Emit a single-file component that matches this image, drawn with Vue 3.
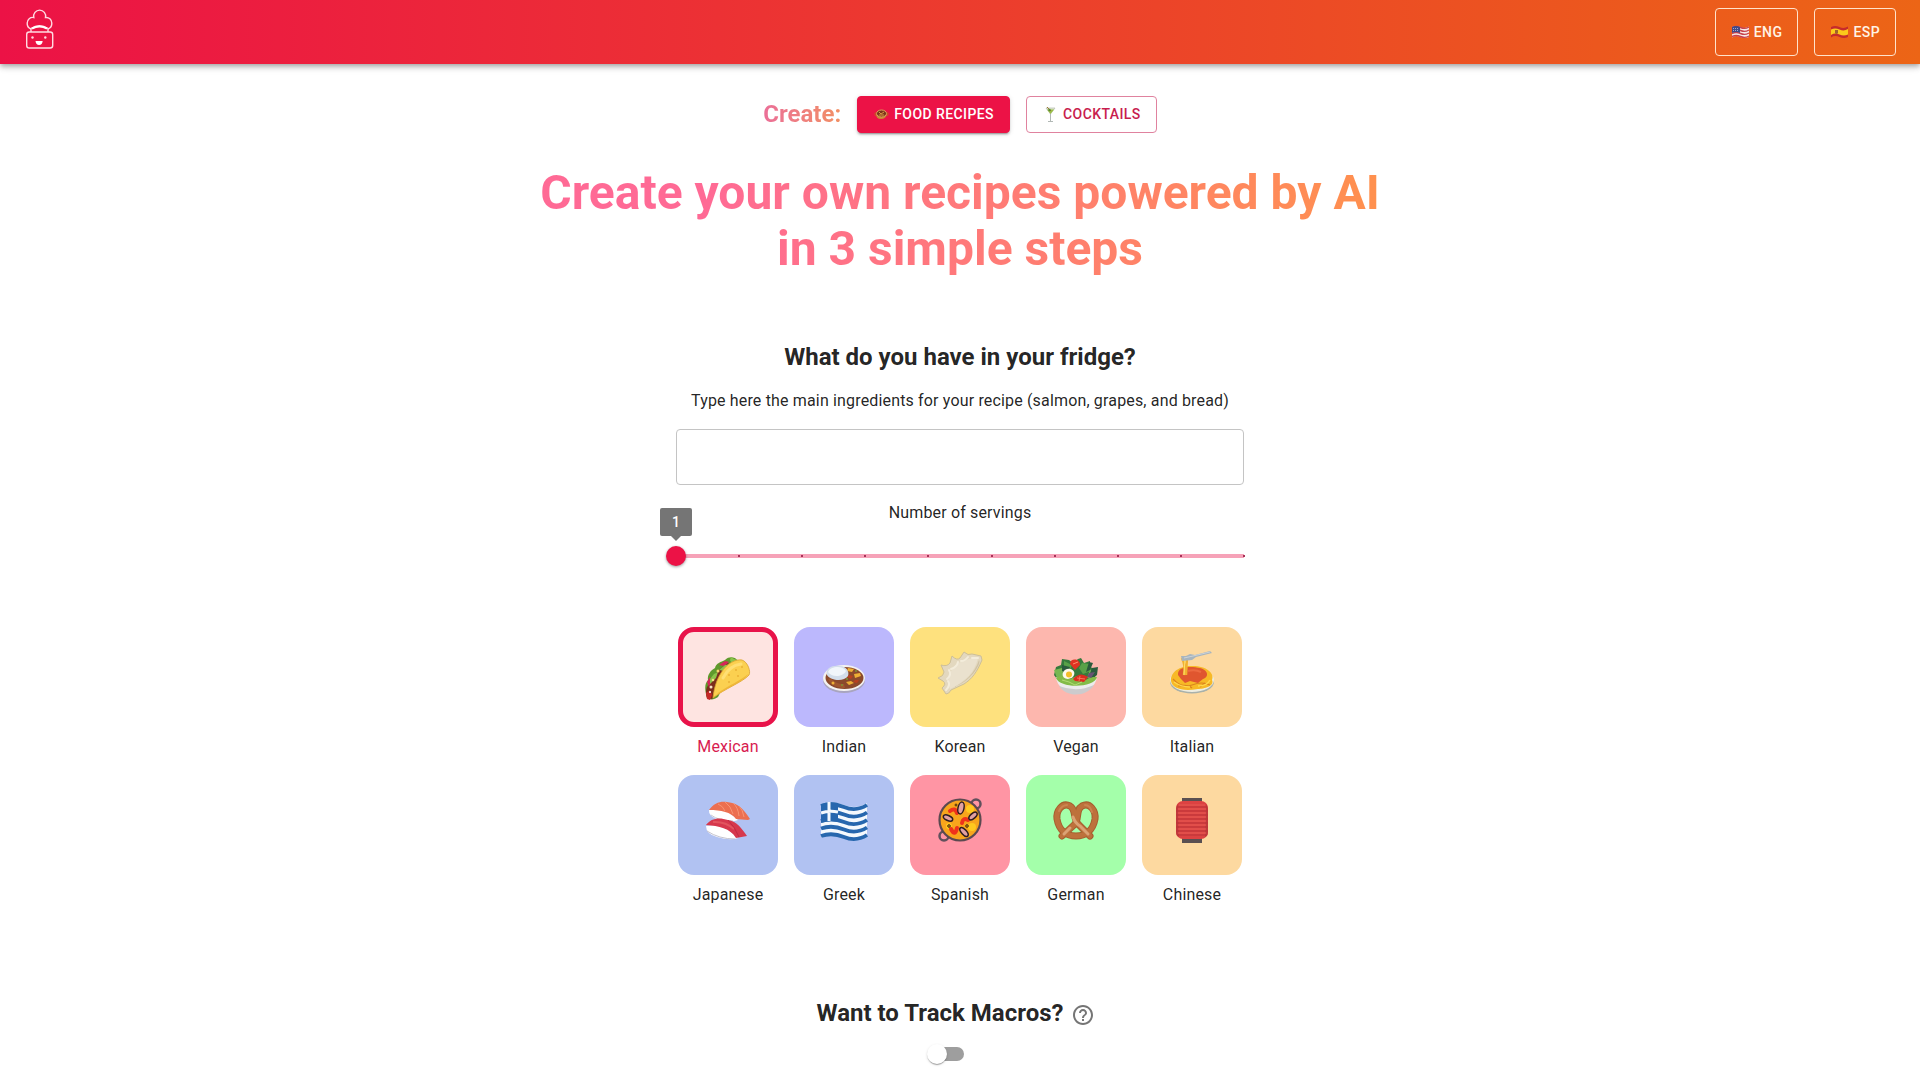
<script setup>
import { ref } from 'vue'

const mode = ref('food')
const ingredients = ref('')
const servings = ref(1)
const selected = ref('Mexican')
const trackMacros = ref(false)

const cuisines = [
  {
    name: 'Mexican',
    color: '#fee4e1',
    art: `
      <path d="M3 45C1 38 0 31 4 27C3 22 7 17 11 15C12 10 17 9 21 7C25 3 31 4 33 7L14 44C10 47 6 47 3 45Z" fill="#5f9a2c"/>
      <path d="M3 45C1 38 2 34 6 30L9 24L15 17L23 10L28 12L13 40L8 46Z" fill="#7b2d1c"/>
      <path d="M15 12l6-4 4 1-5 4zM3 29l3-5 2 3-3 7z" fill="#d7265a"/>
      <path d="M2 40l4-3 2 5-2 5-3-1z" fill="#c62828"/>
      <path d="M6 26l4-5 4-2-2 6-6 6zM15 17l6-5 6-1-7 7zM27 4l3 2 4 1-6 4-2-4z" fill="#8bc34a"/>
      <circle cx="7" cy="34" r="1.5" fill="#f6e3c4"/><circle cx="14" cy="18" r="1.5" fill="#f6d76c"/><circle cx="6" cy="39" r="1" fill="#fff"/><circle cx="9" cy="27" r="1.3" fill="#f5df83"/>
      <path d="M9 45C10 36 12 28 17 20C23 10 32 6 38 7C44 9 47 19 45 22C39 29 20 36 9 45Z" fill="#fbd050" stroke="#d9a22f" stroke-width=".8"/>
      <path d="M14 40C23 33 38 27 44 21C40 29 21 35 11 44Z" fill="#efb638"/>
      <path d="M19 25c4-8 10-13 18-14" stroke="#ffdf74" stroke-width="3" fill="none" stroke-linecap="round"/>
      <g fill="#dc9b22"><circle cx="25" cy="22" r=".8"/><circle cx="32" cy="17" r=".8"/><circle cx="38" cy="14" r=".8"/><circle cx="25" cy="29" r=".8"/><circle cx="34" cy="23" r=".8"/></g>`
  },
  {
    name: 'Indian',
    color: '#bcb8fd',
    art: `
      <ellipse cx="24" cy="32" rx="21" ry="13" fill="#a9a5bf"/>
      <ellipse cx="24" cy="30" rx="21" ry="13" fill="#f4f2f1"/>
      <ellipse cx="24.500" cy="30" rx="19" ry="11" fill="#8b492c"/>
      <path d="M8 31c3 7 11 9 17 9l-1-4c-6 0-10-2-13-6z" fill="#a0572f"/>
      <g fill="#edae35"><path d="M28 20l6 1-2 3-5-1zM34 26l6-1 1 3-6 2zM26 34l5-1 3 2-5 2z"/><circle cx="13" cy="35" r="1.500"/></g>
      <g fill="#b8401f"><path d="M29 27l4 1-2 3-4-2zM35 32l4 0-2 3-4-1z"/></g>
      <g fill="#7d9338"><circle cx="36" cy="23" r="1"/><circle cx="22" cy="37" r="1"/><circle cx="27" cy="31" r="1"/></g>
      <path d="M7 27C5 20 13 17 19 18C25 17 30 23 28 28C24 34 11 33 7 27Z" fill="#d3deeb"/>
      <path d="M8 24C10 18 23 17 26 23C23 29 12 30 8 24Z" fill="#f1f6fb"/>`
  },
  {
    name: 'Korean',
    color: '#fee17e',
    art: `
      <path d="M10 46L6 40Q11 36 7 33L2 30Q8 28 8 24L5 17Q11 19 14 15L16 8Q21 13 24 10L28 4Q32 8 36 6L45 8L46 12C41 24 36 31 28 36L15 42Q13 46 10 46Z" fill="#e3d8bf" stroke="#cdbf98" stroke-linejoin="round"/>
      <path d="M14 41Q9 30 17 20T42 10C39 23 31 33 14 41Z" fill="#eae1ce"/>
      <path d="M17 39C28 36 39 25 43 12C46 15 34 35 17 39Z" fill="#d0c2a3"/>
      <path d="M10 42q5-5 2-9m-1-2q5-4 2-9m2-1q6-2 7-7m3-1q4 0 7-4m4 1l6 0" stroke="#f3ecdb" stroke-width="2" fill="none" stroke-linecap="round"/>`
  },
  {
    name: 'Vegan',
    color: '#fdb7ae',
    art: `
      <path d="M2 27l2-8 5-2 1-6 7 1 4 3 5-4 3-1 3 5 6-2 0 6 5 2-1 6-4 6-30 2z" fill="#367a3c"/>
      <path d="M12 13l8 4-2 5-6-2zM30 15l7 1 2 7-8 3-4-6z" fill="#58a148"/>
      <path d="M2 22l8-2 2 9-6 4zM38 22l6 4-2 6-7-2z" fill="#78b752"/>
      <path d="M10 17l8 2-2 5-6-1zM37 14l4 1-3 7-4 2zM40 20l6-1-1 8-5 4-3-3z" fill="#2b5b3d"/>
      <path d="M37 25l6-1-4 6-4-1z" fill="#685274"/>
      <path d="M18 16c0-6 10-6 10 1l-5 5z" fill="#df3222"/><path d="M21 16l5-2" stroke="#ff8e6b"/>
      <path d="M4 29C6 50 42 50 45 29L36 34L12 34Z" fill="#ececec"/>
      <path d="M7 38C15 50 35 49 42 37Q25 45 7 38Z" fill="#cccbcd"/>
      <path d="M4 30l7-3 7 4 7-3 8 4 8-3 4 0c-2 11-37 12-41 1z" fill="#83bb48"/>
      <ellipse cx="16.500" cy="26" rx="6" ry="5" fill="#fff8eb" transform="rotate(-18 16 26)"/><circle cx="17" cy="26.500" r="3" fill="#f4bd28"/>
      <path d="M21 31q7-8 15-2l-4 5-9-1z" fill="#dc2c1e"/><path d="M25 30l8 1m-5-3l-1 5" stroke="#f5765a"/>
      <path d="M10 32l7 2 6 3 7-3" stroke="#b1db72" fill="none"/>`
  },
  {
    name: 'Italian',
    color: '#fdd9a0',
    art: `
      <ellipse cx="24" cy="34" rx="22" ry="11.500" fill="#a9b1aa"/>
      <ellipse cx="24" cy="32" rx="22" ry="12" fill="#eeede0"/>
      <path d="M3 33C2 23 14 17 25 18C38 18 47 25 44 32C47 38 36 41 30 41C14 44 4 40 3 33Z" fill="#f7b926"/>
      <path d="M5 31q9 10 19 6t18 0M10 38q10-2 14 2m8-1l5-4" stroke="#dc851e" stroke-width="1.200" fill="none"/>
      <path d="M6 34q7 5 16 5m8-1q9 0 12-6" stroke="#ffd84d" stroke-width="1.500" fill="none"/>
      <path d="M10 27C9 18 23 18 32 20C42 23 40 30 35 31L30 35L22 33L17 35L13 31Z" fill="#e0562f"/>
      <path d="M20 23q7-2 13 1" stroke="#ec6a40" stroke-width="2" fill="none"/>
      <path d="M14 10q4 8 2 17m3-18l-1 18" stroke="#f1b131" stroke-width="2.500" fill="none"/><path d="M17 10l-1 17" stroke="#ffe069"/>
      <path d="M13 8h5l4-2 5 1L42 3l2 2-16 4-4 3-10 1z" fill="#a9b5bd"/><path d="M16 10l9-2L42 4" stroke="#ccd3d8" fill="none"/>`
  },
  {
    name: 'Japanese',
    color: '#b1c2f2',
    art: `
      <path d="M5 14q-1 6 10 10 11 3 19 0L20 12z" fill="#fff"/><path d="M7 19q8 6 22 6" stroke="#c8cbd4" fill="none"/>
      <path d="M5 14C10 7 16 5 23 6C35 7 40 14 46 23L44 24L32 23C27 16 17 14 5 14Z" fill="#ec6f50"/>
      <path d="M14 8q5 2 7 7m0-9q6 4 8 12m0-11q5 4 6 13m0-10q4 4 5 11" stroke="#f79474" stroke-width="1" fill="none"/>
      <path d="M2 30q0 8 11 11 13 4 21 1L18 28z" fill="#fff"/><path d="M3 35q12 8 28 8" stroke="#c5c4cf" fill="none"/>
      <path d="M2 29C7 22 15 21 24 24C33 25 38 33 43 40L32 42C26 32 15 30 2 29Z" fill="#d6384d"/>
      <path d="M9 26q12-1 21 7" stroke="#e2545f" stroke-width="2" fill="none"/><path d="M24 24q7 7 11 17" stroke="#c02a43" fill="none"/>`
  },
  {
    name: 'Greek',
    color: '#b1c2f2',
    art: `
      <path d="M1 8Q12 4 24 9T47 7V40Q36 45 24 40T1 42Z" fill="#f5f9fd"/>
      <g fill="none" stroke="#2767ae" stroke-width="3.800"><path d="M1 10Q12 6 24 11T47 9M1 17.500Q12 13.500 24 18.500T47 16.500M1 25Q12 21 24 26T47 24M1 32.500Q12 28.500 24 33.500T47 31.500M1 40Q12 36 24 41T47 39"/></g>
      <path d="M1 8Q9 5 18 7V26Q9 24 1 27Z" fill="#2767ae"/><path d="M9 6v19M1 17q8-3 17-1" stroke="#f5f9fd" stroke-width="3" fill="none"/>`
  },
  {
    name: 'Spanish',
    color: '#ff95a4',
    art: `
      <g fill="none" stroke="#61505c" stroke-width="2.500"><circle cx="40" cy="8" r="4.500"/><circle cx="8" cy="40" r="4.500"/></g>
      <circle cx="24" cy="24" r="20.500" fill="#f8a51c" stroke="#5c4950" stroke-width="2.200"/>
      <g fill="#ffc91f"><circle cx="34" cy="13" r="4"/><circle cx="36" cy="31" r="4"/><circle cx="13" cy="30" r="3"/></g>
      <g fill="none" stroke="#ef321b" stroke-width="4" stroke-linecap="round"><path d="M14 15q5-4 7 2M15 33q4 8 6-1M26 27q1-6 6-3"/></g>
      <g fill="#e2a0a1" stroke="#2d1c22" stroke-width="1.500"><ellipse cx="25" cy="12" rx="3" ry="6" transform="rotate(12 25 12)"/><ellipse cx="12" cy="22" rx="2.500" ry="5" transform="rotate(-65 12 22)"/><ellipse cx="37" cy="20" rx="2.500" ry="5" transform="rotate(48 37 20)"/><ellipse cx="28" cy="36" rx="2.500" ry="5.500" transform="rotate(-42 28 36)"/></g>
      <g fill="#d28b11" stroke="#4a300f"><circle cx="13" cy="30" r="1.300"/><circle cx="31" cy="30" r="1.300"/><circle cx="20" cy="9" r="1"/></g>`
  },
  {
    name: 'German',
    color: '#a4ffaa',
    art: `
      <path d="M10 40L22 29C28 24 23 14 30 10C38 6 44 15 43 23C41 35 33 40 24 40C15 40 7 35 5 23C4 15 10 6 18 10C25 14 20 23 27 29L38 40" fill="none" stroke="#a65e2f" stroke-width="7" stroke-linecap="round" stroke-linejoin="round"/>
      <path d="M10 40L22 29C28 24 23 14 30 10C38 6 44 15 43 23C41 35 33 40 24 40C15 40 7 35 5 23C4 15 10 6 18 10C25 14 20 23 27 29L38 40" fill="none" stroke="#bd713c" stroke-width="5" stroke-linecap="round"/>
      <path d="M21 21q2 6 7 9l8 8M12 38l6-6" fill="none" stroke="#dba274" stroke-width="3" stroke-linecap="round"/>
      <path d="M7 15q3-6 8-6M33 9q5 0 7 7" fill="none" stroke="#cb8450" stroke-width="2" stroke-linecap="round"/>`
  },
  {
    name: 'Chinese',
    color: '#fdd9a0',
    art: `
      <path d="M14 2h20v5H14zM14 42h20v5H14z" fill="#5a5051"/>
      <rect x="8" y="5" width="32" height="38" rx="7" fill="#dc4242"/>
      <path d="M10 8q-2 2-2 5v23q0 4 3 5zM38 8q2 2 2 5v23q0 4-3 5z" fill="#c23a3d"/>
      <path d="M9 11h30M8 15h32M8 19h32M8 23h32M8 27h32M8 31h32M8 35h32M9 39h30" stroke="#b93236"/>
      <path d="M11 9h26M10 13h28M10 17h28M10 21h28M10 25h28M10 29h28M10 33h28M10 37h28" stroke="#e75a52"/>`
  }
]
</script>

<template>
  <div class="page">
    <header class="bar">
      <a class="logo" href="#" aria-label="Home">
        <svg width="32" height="42" viewBox="0 0 32 42" fill="none" stroke="#ffdbe2" stroke-width="1.400">
          <rect x="2.700" y="24" width="26" height="16" rx="2.500" />
          <path d="M7 21A6 6 0 0 1 3.200 15A5.500 5.500 0 0 1 9.800 9.500A6 6 0 1 1 21.500 9.500A5.500 5.500 0 0 1 27.800 15A6 6 0 0 1 24 21" />
          <path d="M7 24V20.500Q15.500 15 24 20.500V24" />
          <path d="M8 20.500Q15.500 16.500 23 20.500" stroke="#fff" stroke-width="2" />
          <g fill="#ffdbe2" stroke="none">
            <circle cx="8.500" cy="29.500" r="1.200" /><circle cx="21.300" cy="29.500" r="1.200" />
            <path d="M11.500 33h7.200q-.5 4-3.600 4t-3.600-4z" fill="#fff" />
          </g>
        </svg>
      </a>
      <nav class="langs" aria-label="Language">
        <button type="button" class="lang">
          <svg width="17" height="14" viewBox="0 0 17 14">
            <path d="M0 2Q4 0 8.500 2T17 1.500V12Q13 14 8.500 12T0 12.500Z" fill="#f6e9e7" />
            <path d="M0 2.500Q4 .5 8.500 2.500T17 2M0 5.500Q4 3.500 8.500 5.500T17 5M0 8.500Q4 6.500 8.500 8.500T17 8M0 11.500Q4 9.500 8.500 11.500T17 11" fill="none" stroke="#c8434d" stroke-width="1.400" />
            <path d="M0 2Q4 0 8 2V8Q4 6 0 8Z" fill="#424a86" />
            <path d="M1 3.500h6M1 5.500h6" stroke="#b9bfde" stroke-width=".8" stroke-dasharray="1 1" />
          </svg>
          <span>ENG</span>
        </button>
        <button type="button" class="lang">
          <svg width="17" height="14" viewBox="0 0 17 14">
            <path d="M0 2Q4 0 8.500 2T17 1.500V12Q13 14 8.500 12T0 12.500Z" fill="#c62b2b" />
            <path d="M0 4.500Q4 2.500 8.500 4.500T17 4V9.500Q13 11.500 8.500 9.500T0 10Z" fill="#fbc91b" />
            <path d="M4 5h3v3q-1.500 2-3 0z" fill="#a2612b" />
          </svg>
          <span>ESP</span>
        </button>
      </nav>
    </header>

    <main class="content">
      <div class="modes">
        <p class="modes-label">Create:</p>
        <button type="button" class="mode" :class="{ active: mode === 'food' }" @click="mode = 'food'">
          <svg width="16" height="16" viewBox="0 0 16 16">
            <path d="M3 8q0 5 5 5t6-5z" fill="#c98a35" />
            <ellipse cx="8.500" cy="7.500" rx="5" ry="3.500" fill="#7b351c" stroke="#dba35a" />
            <path d="M6 6l2 2 3-2M6 9l5 0" stroke="#d99a45" fill="none" />
            <path d="M3 7H2v2l1 1m11-3h1v2l-1 1" stroke="#c45b21" fill="none" />
          </svg>
          <span>Food recipes</span>
        </button>
        <button type="button" class="mode" :class="{ active: mode === 'drinks' }" @click="mode = 'drinks'">
          <svg width="16" height="16" viewBox="0 0 16 16">
            <path d="M4 2h9L8.500 8z" fill="#dfe8d2" stroke="#b5bbb0" stroke-width=".7" />
            <path d="M5 3.500h7L8.500 8z" fill="#9bbd45" />
            <path d="M8.500 8v7M6 15.500h5" stroke="#b1b8b5" fill="none" />
            <path d="M5 1l4 4" stroke="#a17b38" /><circle cx="7.500" cy="4" r="1.200" fill="#568730" />
          </svg>
          <span>Cocktails</span>
        </button>
      </div>

      <h1 class="title">Create your own recipes powered by AI in 3 simple steps</h1>

      <form class="form" @submit.prevent>
        <h2 class="heading">What do you have in your fridge?</h2>
        <label class="caption" for="ingredients">Type here the main ingredients for your recipe (salmon, grapes, and bread)</label>
        <input id="ingredients" v-model="ingredients" class="field" type="text" />

        <label class="caption" for="servings">Number of servings</label>
        <div class="slider">
          <input id="servings" v-model.number="servings" type="range" min="1" max="10" step="1" />
          <div class="marks" aria-hidden="true"><i v-for="n in 10" :key="n" :class="{ under: n === servings }"></i></div>
          <div class="rail">
            <output class="bubble" for="servings" :style="{ left: ((servings - 1) / 9) * 100 + '%' }">{{ servings }}</output>
          </div>
        </div>

        <div class="cuisines" role="radiogroup" aria-label="Cuisine">
          <label v-for="c in cuisines" :key="c.name" class="cuisine" :class="{ chosen: c.name === selected }">
            <input v-model="selected" type="radio" name="cuisine" :value="c.name" />
            <span class="tile" :style="{ backgroundColor: c.color }">
              <svg width="48" height="48" viewBox="0 0 48 48" aria-hidden="true" v-html="c.art"></svg>
            </span>
            <span>{{ c.name }}</span>
          </label>
        </div>

        <div class="macros">
          <h2 class="heading"><label for="macros">Want to Track Macros?</label></h2>
          <button type="button" class="help" aria-label="About macros">
            <svg width="24" height="24" viewBox="0 0 24 24" fill="currentColor">
              <path d="M11 18h2v-2h-2v2zm1-16C6.480 2 2 6.480 2 12s4.480 10 10 10 10-4.480 10-10S17.520 2 12 2zm0 18c-4.410 0-8-3.590-8-8s3.590-8 8-8 8 3.590 8 8-3.590 8-8 8zm0-14c-2.210 0-4 1.790-4 4h2c0-1.100.9-2 2-2s2 .9 2 2c0 2-3 1.750-3 5h2c0-2.250 3-2.500 3-5 0-2.210-1.790-4-4-4z" />
            </svg>
          </button>
        </div>
        <div class="toggle">
          <input id="macros" v-model="trackMacros" type="checkbox" role="switch" />
        </div>
      </form>
    </main>
  </div>
</template>

<style>
body {
  margin: 0;
  background: #fff;
}
</style>

<style scoped>
.page {
  --red: #ec1246;
  color: rgba(0, 0, 0, 0.87);
  font: 400 16px/24px Roboto, "Liberation Sans", sans-serif;
  letter-spacing: 0.01em;
}

.page * {
  box-sizing: border-box;
}

button,
input {
  margin: 0;
  font: inherit;
  color: inherit;
}

.bar {
  display: flex;
  align-items: center;
  justify-content: space-between;
  min-height: 64px;
  padding: 0 24px;
  background: linear-gradient(90deg, #ec1246, #ec6516);
  box-shadow: 0 2px 4px -1px rgba(0, 0, 0, 0.2), 0 4px 5px rgba(0, 0, 0, 0.14), 0 1px 10px rgba(0, 0, 0, 0.12);
}

.logo {
  display: flex;
  align-self: flex-start;
  padding-top: 8px;
}

.langs {
  display: flex;
  gap: 16px;
}

.lang,
.mode {
  display: flex;
  align-items: center;
  border-radius: 4px;
  font-size: 14px;
  font-weight: 500;
  letter-spacing: 0.03em;
  text-transform: uppercase;
  cursor: pointer;
}

.lang {
  gap: 5px;
  height: 48px;
  padding: 0 15px 0 16px;
  border: 1px solid #ffe3cb;
  background: none;
  color: #fff3e6;
}

.content {
  display: flex;
  flex-direction: column;
  align-items: center;
  padding: 32px 24px 0;
}

.modes {
  display: flex;
  align-items: flex-start;
  gap: 16px;
}

.modes-label,
.title {
  margin: 0;
  background: linear-gradient(90deg, #ff6a95, #ff6a95 20%, #ff914d);
  background-clip: text;
  -webkit-background-clip: text;
  color: transparent;
  font-weight: 700;
  letter-spacing: normal;
}

.modes-label {
  font-size: 24px;
  line-height: 36px;
  background-image: linear-gradient(90deg, #eb6f98, #f29064);
}

.mode {
  gap: 5px;
  height: 37px;
  padding: 0 15px 1px;
  border: 1px solid #e0829f;
  background: #fff;
  color: #c81d4e;
}

.mode.active {
  border-color: var(--red);
  background: var(--red);
  color: #fff;
  box-shadow: 0 3px 1px -2px rgba(0, 0, 0, 0.2), 0 2px 2px rgba(0, 0, 0, 0.14), 0 1px 5px rgba(0, 0, 0, 0.12);
}

.title {
  max-width: 852px;
  margin-top: 32px;
  font-size: 48px;
  line-height: 56px;
  text-align: center;
}

.form {
  display: flex;
  flex-direction: column;
  width: 100%;
  max-width: 568px;
  margin-top: 64px;
}

.heading {
  margin: 0;
  font-size: 24px;
  font-weight: 700;
  line-height: 32px;
  letter-spacing: normal;
  text-align: center;
}

.caption {
  margin-top: 16px;
  text-align: center;
}

.field {
  width: 100%;
  height: 56px;
  margin-top: 16px;
  padding: 0 14px;
  border: 1px solid #c4c4c4;
  border-radius: 4px;
  background: #fff;
}

.slider {
  position: relative;
  display: flex;
  height: 28px;
  margin: 17px -10px 0;
}

.slider input {
  width: 100%;
  appearance: none;
  background: linear-gradient(#f6a2b8, #f6a2b8) center / calc(100% - 20px) 4px no-repeat;
  cursor: pointer;
}

.slider input::-webkit-slider-thumb {
  appearance: none;
  width: 20px;
  height: 20px;
  border-radius: 50%;
  background: var(--red);
  box-shadow: 0 1px 3px rgba(0, 0, 0, 0.4);
}

.marks {
  position: absolute;
  inset: 13px 9px auto;
  display: flex;
  justify-content: space-between;
  pointer-events: none;
}

.marks i {
  width: 2px;
  height: 2px;
  background: #a83258;
}

.marks .under {
  visibility: hidden;
}

.rail {
  position: absolute;
  inset: 0 10px auto;
}

.bubble {
  position: absolute;
  bottom: 6px;
  width: 32px;
  height: 28px;
  margin-left: -16px;
  border-radius: 2px;
  background: #757575;
  color: #fff;
  font-size: 14px;
  font-weight: 500;
  line-height: 28px;
  text-align: center;
}

.bubble::after {
  content: "";
  position: absolute;
  top: 100%;
  left: 50%;
  margin-left: -5px;
  border: 5px solid transparent;
  border-top-color: #757575;
  border-bottom: 0;
}

.cuisines {
  display: flex;
  flex-wrap: wrap;
  justify-content: center;
  gap: 16px;
  margin-top: 57px;
}

.cuisine {
  position: relative;
  display: flex;
  flex-direction: column;
  align-items: center;
  gap: 8px;
  cursor: pointer;
}

.cuisine input {
  position: absolute;
  opacity: 0;
}

.tile {
  display: flex;
  align-items: flex-start;
  justify-content: center;
  width: 100px;
  height: 100px;
  padding-top: 21px;
  border-radius: 16px;
}

.chosen {
  color: #d81b50;
}

.chosen .tile {
  border: 5px solid #e8134a;
}

.macros {
  display: flex;
  justify-content: center;
  margin-top: 88px;
}

.macros .heading {
  padding-top: 2px;
}

.help {
  display: flex;
  padding: 8px;
  border: 0;
  background: none;
  color: #757575;
  cursor: pointer;
}

.toggle {
  display: flex;
  justify-content: center;
  padding: 12px 26px 19px 0;
}

.toggle input {
  position: relative;
  display: flex;
  align-items: center;
  appearance: none;
  width: 34px;
  height: 14px;
  border-radius: 7px;
  background: #9e9e9e;
  cursor: pointer;
}

.toggle input::before {
  content: "";
  position: absolute;
  left: -3px;
  width: 20px;
  height: 20px;
  border-radius: 50%;
  background: #fff;
  box-shadow: 0 2px 1px -1px rgba(0, 0, 0, 0.2), 0 1px 1px rgba(0, 0, 0, 0.14), 0 1px 3px rgba(0, 0, 0, 0.12);
}

.toggle input:checked {
  background: #f6a2b8;
}

.toggle input:checked::before {
  left: 17px;
  background: var(--red);
}
</style>
